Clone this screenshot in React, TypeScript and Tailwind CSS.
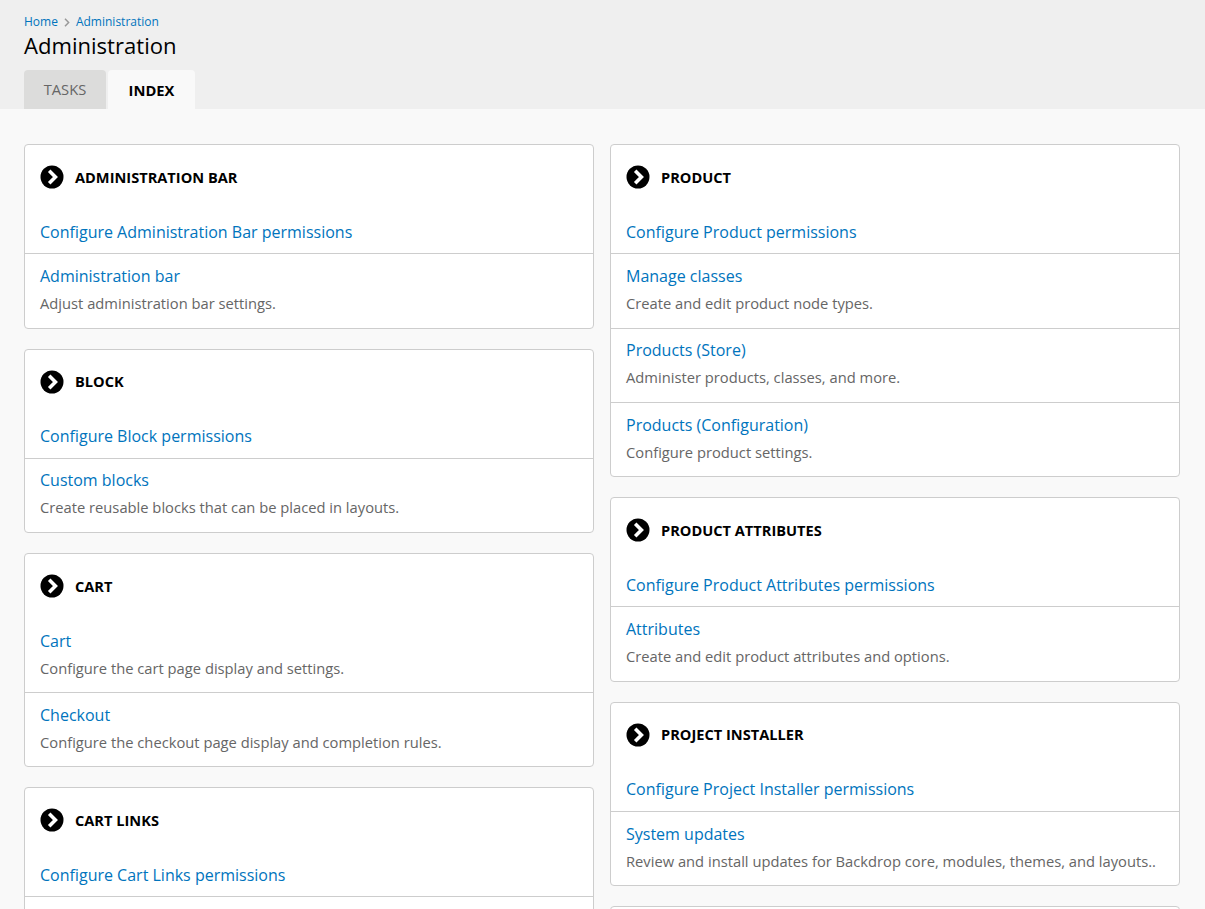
type Item = { title: string; desc?: string };
type Section = { name: string; items: Item[] };

const LEFT: Section[] = [
  {
    name: "Administration bar",
    items: [
      { title: "Configure Administration Bar permissions" },
      { title: "Administration bar", desc: "Adjust administration bar settings." },
    ],
  },
  {
    name: "Block",
    items: [
      { title: "Configure Block permissions" },
      { title: "Custom blocks", desc: "Create reusable blocks that can be placed in layouts." },
    ],
  },
  {
    name: "Cart",
    items: [
      { title: "Cart", desc: "Configure the cart page display and settings." },
      { title: "Checkout", desc: "Configure the checkout page display and completion rules." },
    ],
  },
  {
    name: "Cart links",
    items: [{ title: "Configure Cart Links permissions" }, { title: "" }],
  },
];

const RIGHT: Section[] = [
  {
    name: "Product",
    items: [
      { title: "Configure Product permissions" },
      { title: "Manage classes", desc: "Create and edit product node types." },
      { title: "Products (Store)", desc: "Administer products, classes, and more." },
      { title: "Products (Configuration)", desc: "Configure product settings." },
    ],
  },
  {
    name: "Product attributes",
    items: [
      { title: "Configure Product Attributes permissions" },
      { title: "Attributes", desc: "Create and edit product attributes and options." },
    ],
  },
  {
    name: "Project installer",
    items: [
      { title: "Configure Project Installer permissions" },
      { title: "System updates", desc: "Review and install updates for Backdrop core, modules, themes, and layouts.." },
    ],
  },
  // next card only shows its top edge in the viewport
  { name: "", items: [] },
];

function ArrowBullet() {
  return (
    <svg width="24" height="24" viewBox="0 0 24 24" className="shrink-0">
      <circle cx="12" cy="12" r="11.5" fill="#000" />
      <path d="M9.2 5.8 15.4 12l-6.2 6.2" fill="none" stroke="#fff" strokeWidth="3.6" />
    </svg>
  );
}

function Card({ section }: { section: Section }) {
  return (
    <section className="rounded-[4px] border border-[#cdcdcd] bg-white">
      <h2 className="flex h-[74.6px] items-center gap-[11px] pb-[10.5px] pl-[15px] text-[14.6px] font-bold uppercase leading-none text-black">
        {section.name && <ArrowBullet />}
        {section.name}
      </h2>
      {section.items.map((item, i) => (
        <div
          key={item.title}
          className={
            (i === 0 ? "px-[15px] " : "border-t border-[#cdcdcd] px-[15px] pt-[9.9px] ") +
            (item.desc ? "pb-[12.5px]" : "pb-[9.4px]")
          }
        >
          <a className="block text-[16px] leading-[24px] text-[#0074bd]">{item.title}</a>
          {item.desc && (
            <p className="mt-[3px] text-[14.72px] leading-[24px] text-[#666]">{item.desc}</p>
          )}
        </div>
      ))}
    </section>
  );
}

export default function App() {
  return (
    <div className="h-screen overflow-hidden bg-[#f9f9f9] font-['Open_Sans',sans-serif]">
      <header className="h-[109px] bg-[#efefef] px-6 pt-[13px]">
        <nav className="flex h-[17px] items-center text-[12px] leading-[17px] text-[#0074bd]">
          <a>Home</a>
          <svg width="6" height="9" viewBox="0 0 6 9" className="mx-[6px] mt-[2px]">
            <path d="M1 .8 4.6 4.5 1 8.2" fill="none" stroke="#999" strokeWidth="1.5" />
          </svg>
          <a>Administration</a>
        </nav>
        <h1 className="-mt-[1px] text-[22.08px] leading-[32px] text-black">Administration</h1>
        <div className="mt-[9px] flex h-[39px] gap-[2px] text-[14.72px] uppercase">
          <div className="flex w-[82px] items-center justify-center rounded-t-[4px] bg-[#dcdcdb] text-[#666]">
            Tasks
          </div>
          <div className="flex w-[87px] items-center justify-center rounded-t-[4px] bg-[#f9f9f9] pt-[1px] font-bold text-black">
            Index
          </div>
        </div>
      </header>
      <main className="grid grid-cols-[570px_570px] gap-x-4 pt-[35.2px] pl-6">
        {[LEFT, RIGHT].map((col, i) => (
          <div key={i} className="flex flex-col gap-5">
            {col.map((s, j) => (
              <Card key={j} section={s} />
            ))}
          </div>
        ))}
      </main>
    </div>
  );
}
